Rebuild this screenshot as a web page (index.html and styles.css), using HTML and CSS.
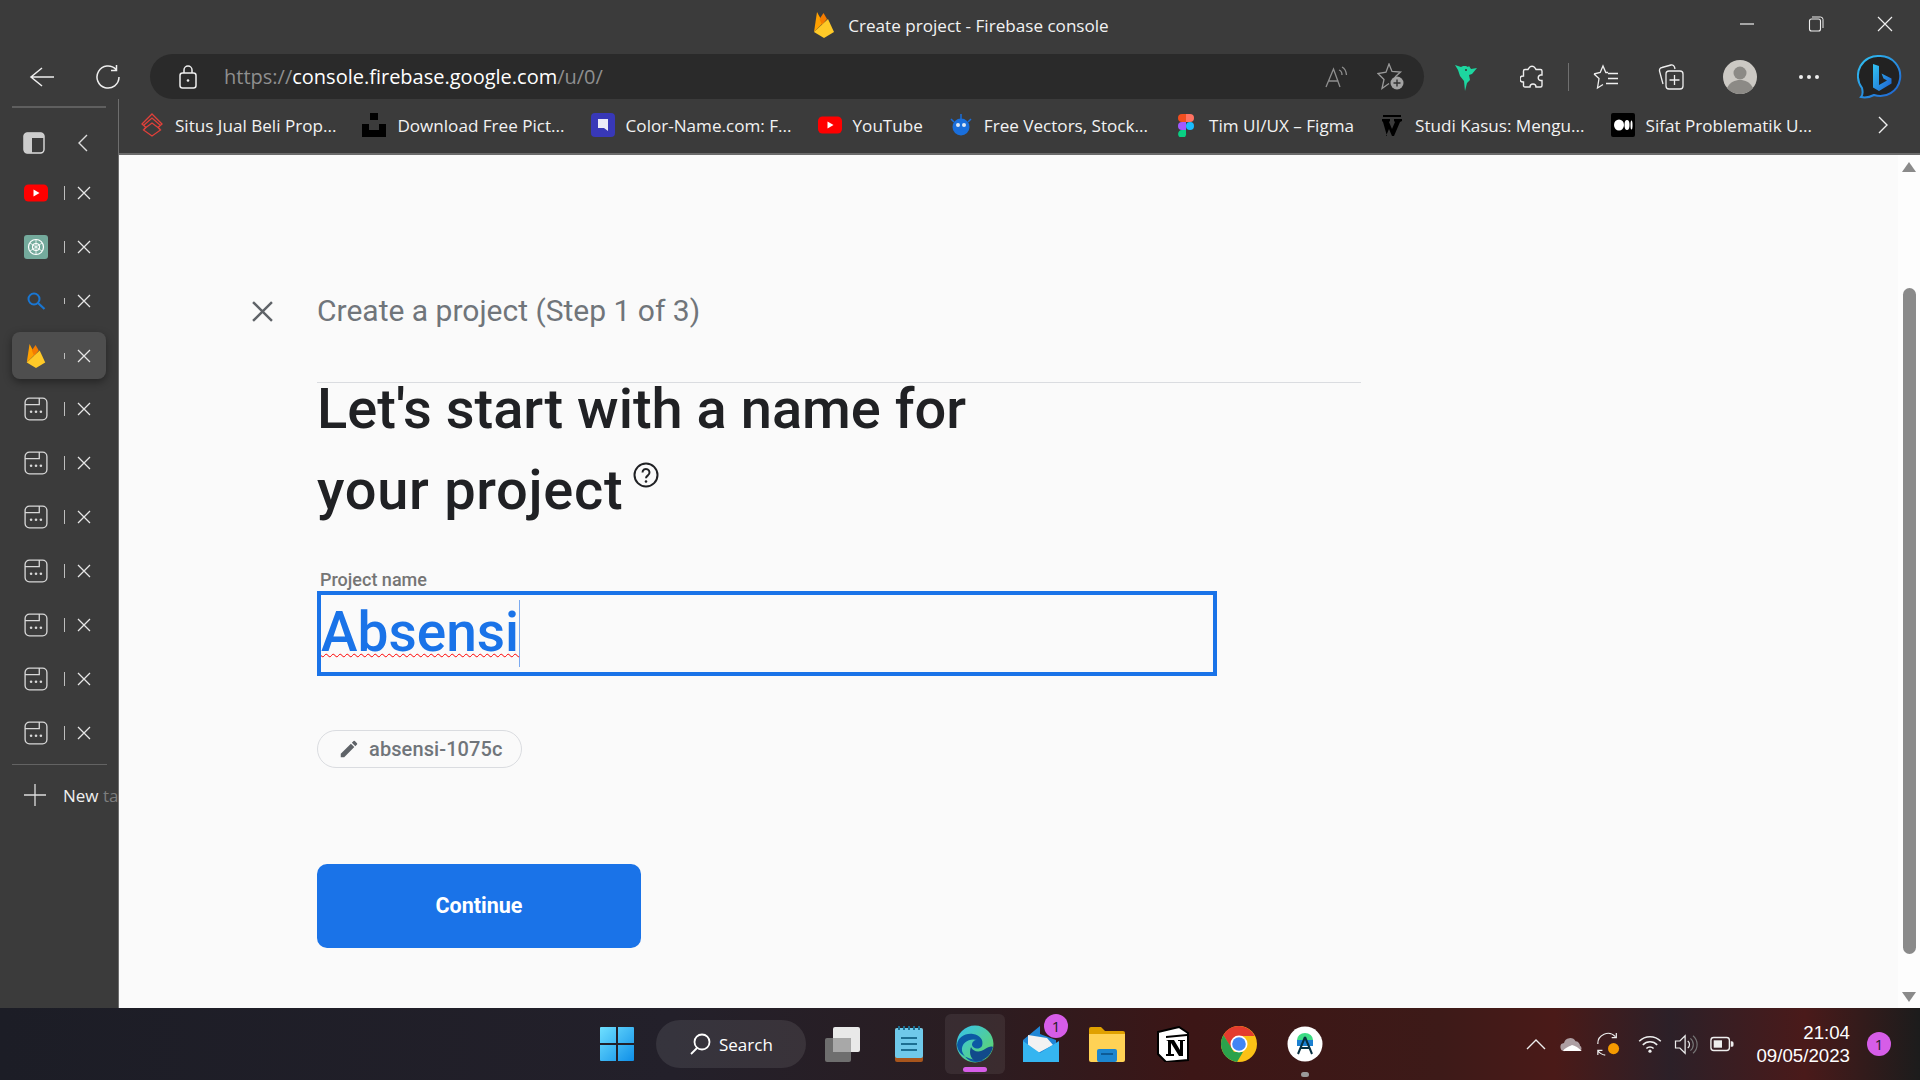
FILE: index.html
```html
<!DOCTYPE html>
<html lang="en">
  <head>
    <meta charset="UTF-8" />
    <title>Create project - Firebase console</title>
    <link rel="stylesheet" href="styles.css">
  </head>
  <body>
    <svg class="sprites" width="0" height="0">
      <symbol id="fire" viewBox="0 0 20 26">
        <path d="M0 20 3 0l6 11z" fill="#ffa000"/>
        <path d="M8 13 5.500 7 9.500 1l3.500 6z" fill="#f57c00"/>
        <path d="M0 20 14 7l6 13-10 6z" fill="#ffca28"/>
      </symbol>
      <symbol id="yt" viewBox="0 0 24 18">
        <rect width="24" height="17" y=".5" rx="4.500" fill="#f00"/>
        <path d="M9.500 5.500v7l6-3.500z" fill="#fff"/>
      </symbol>
      <symbol id="blank" viewBox="0 0 22 22">
        <path d="M1 5a4 4 0 0 1 4-4h12a4 4 0 0 1 4 4v12a4 4 0 0 1-4 4H5a4 4 0 0 1-4-4zM1 7h13V1" fill="none" stroke="#d8d8d8" stroke-width="1.200"/>
        <circle cx="6.500" cy="13.500" r="1.200" fill="#d8d8d8"/>
        <circle cx="11" cy="13.500" r="1.200" fill="#d8d8d8"/>
        <circle cx="15.500" cy="13.500" r="1.200" fill="#d8d8d8"/>
      </symbol>
      <symbol id="x" viewBox="0 0 14 14">
        <path d="M1 1l12 12M13 1 1 13" stroke="#e6e6e6" stroke-width="1.300" fill="none"/>
      </symbol>
    </svg>

    <div class="titlebar">
      <div class="title">
        <svg class="title-fire"><use href="#fire"/></svg>
        <span>Create project - Firebase console</span>
      </div>
      <div class="window-btns">
        <svg width="16" height="16" viewBox="0 0 16 16"><path d="M1 8h14" stroke="#eee" stroke-width="1.200"/></svg>
        <svg width="16" height="16" viewBox="0 0 16 16"><rect x="1.500" y="3" width="11" height="12" rx="2" fill="none" stroke="#eee" stroke-width="1.100"/><path d="M4 1h8.500a2.500 2.500 0 0 1 2.500 2.500V12" fill="none" stroke="#eee"/></svg>
        <svg width="16" height="16" viewBox="0 0 16 16"><path d="M1 1l14 14M15 1 1 15" stroke="#eee" stroke-width="1.200"/></svg>
      </div>
    </div>

    <div class="toolbar">
      <button class="nav-btn">
        <svg width="26" height="22" viewBox="0 0 26 22"><path d="M13 2 2 11l11 9M2 11h23" fill="none" stroke="#eee" stroke-width="1.500"/></svg>
      </button>
      <button class="nav-btn">
        <svg width="26" height="26" viewBox="0 0 26 26"><path d="M21 5.500A11 11 0 1 0 24 13M21.500 1v5.500H16" fill="none" stroke="#eee" stroke-width="1.500"/></svg>
      </button>
      <div class="address">
        <svg class="lock" width="20" height="24" viewBox="0 0 20 24"><rect x="2" y="8" width="16" height="15" rx="2.500" fill="none" stroke="#eee" stroke-width="1.500"/><path d="M6 8V5a4 4 0 0 1 8 0v3" fill="none" stroke="#eee" stroke-width="1.500"/><circle cx="10" cy="15.500" r="1.300" fill="#eee"/></svg>
        <div class="url"><span class="dim">https://</span>console.firebase.google.com<span class="dim">/u/0/</span></div>
        <svg class="read" width="24" height="24" viewBox="0 0 24 24"><path d="M1 22 8.500 4 15 22M3.500 16h10" fill="none" stroke="#8f8f8f" stroke-width="1.300"/><path d="M14 5q3 1 3 5M17 2q4 2 4.500 8" fill="none" stroke="#8f8f8f" stroke-width="1.300"/></svg>
        <svg width="28" height="28" viewBox="0 0 28 28"><path d="M12 20.500 5 25.500l2-9-6-6 8-1.300L12 1l3 7.500 8.500.5-5.500 5" fill="none" stroke="#9a9a9a" stroke-width="1.300"/><circle cx="20" cy="20" r="6.500" fill="#a3a3a3"/><path d="M20 16.500v7M16.500 20h7" stroke="#333" stroke-width="1.400"/></svg>
      </div>
      <div class="tool-icons">
        <svg width="24" height="30" viewBox="0 0 24 30"><path d="M1 3l6 2 2-1 3 0 2 1 1-1 2 3 6-1-5 6-3 1 1 5-3 3-2 8-1-10-4-5-2-6z" fill="#1dd6a0"/><circle cx="12" cy="8" r="1" fill="#333"/></svg>
        <svg width="24" height="26" viewBox="0 0 24 26"><path d="M9 4a3.500 3.500 0 0 1 6 0l1 1.500h4.500a1.500 1.500 0 0 1 1.500 1.500v4h-1.500a2.800 2.800 0 0 0 0 5.500H22v5a1.500 1.500 0 0 1-1.500 1.500H16a3 3 0 0 0-6 0H5A1.500 1.500 0 0 1 3.500 22v-4H3a3 3 0 0 1 0-6h.5V7A1.500 1.500 0 0 1 5 5.500h3z" fill="none" stroke="#eee" stroke-width="1.400"/></svg>
        <span class="tool-sep"></span>
        <svg width="26" height="26" viewBox="0 0 26 26"><path d="M1 10l6.200-1.500L10 2l2.800 6.500H15M1 10l5 4.500L4.500 24l5.500-3.500M15 9.500h10M15 14.500h10M13 19.500h12" fill="none" stroke="#eee" stroke-width="1.300"/></svg>
        <svg width="26" height="26" viewBox="0 0 26 26"><path d="M5 20 1.500 7A3 3 0 0 1 4 3.500L13 1a3 3 0 0 1 3.500 2L17 5" fill="none" stroke="#eee" stroke-width="1.300"/><rect x="8" y="7" width="17" height="18" rx="3" fill="none" stroke="#eee" stroke-width="1.300"/><path d="M16.500 11v10M11.500 16h10" stroke="#eee" stroke-width="1.300"/></svg>
        <svg class="avatar" width="34" height="34" viewBox="0 0 34 34"><circle cx="17" cy="17" r="17" fill="#ccc9c4"/><circle cx="17" cy="13" r="6.500" fill="#8c8a86"/><path d="M4 28c3-6 8-8 13-8s10 2 13 8a17 17 0 0 1-26 0z" fill="#8c8a86"/></svg>
        <div class="dots"><i></i><i></i><i></i></div>
        <svg class="bing" width="46" height="46" viewBox="0 0 46 46">
          <defs><linearGradient id="bingg" x1="0" y1="0" x2="1" y2="1"><stop offset="0" stop-color="#31c4f3"/><stop offset="1" stop-color="#1e5fd0"/></linearGradient></defs>
          <path d="M23 2a20 20 0 1 1-6 39c-4 2-9 3-13 2 2-2 2-5 1-9A20 20 0 0 1 23 2z" fill="#222" stroke="url(#bingg)" stroke-width="2"/>
          <path d="M16 10l6 2v19l8-4.500-3.500-2-2-5 10 5v5L22 37l-6-3.500z" fill="url(#bingg)"/>
        </svg>
      </div>
    </div>

    <div class="middle">
      <aside class="sidebar">
        <div class="side-top">
          <svg width="22" height="22" viewBox="0 0 22 22"><rect x="1" y="1" width="20" height="20" rx="3.500" fill="none" stroke="#ddd" stroke-width="1.400"/><path d="M1 5a3 3 0 0 1 3-4h14a3 3 0 0 1 3 4v1H9v15H4a3 3 0 0 1-3-3z" fill="#ccc"/></svg>
          <svg width="12" height="20" viewBox="0 0 12 20"><path d="M10 2 2 10l8 8" fill="none" stroke="#ddd" stroke-width="1.400"/></svg>
        </div>
        <div class="tab">
          <svg class="fav"><use href="#yt"/></svg><span class="tab-sep"></span><svg class="tab-x"><use href="#x"/></svg>
        </div>
        <div class="tab">
          <svg class="fav" viewBox="0 0 24 24"><rect width="24" height="24" rx="3" fill="#74aa9c"/><circle cx="12" cy="12" r="7.500" fill="none" stroke="#fff" stroke-width="1.200"/><circle cx="12" cy="12" r="3.500" fill="none" stroke="#fff" stroke-width="1.200"/><path d="M6 8l12 8M6 16 18 8M12 4.500v15" stroke="#fff" stroke-width=".8"/></svg><span class="tab-sep short"></span><svg class="tab-x"><use href="#x"/></svg>
        </div>
        <div class="tab">
          <svg class="fav" viewBox="0 0 24 24"><circle cx="10" cy="10" r="5.500" fill="none" stroke="#1976d2" stroke-width="2"/><path d="M14 14l6.500 6" stroke="#1976d2" stroke-width="2.200"/></svg><span class="tab-sep dot"></span><svg class="tab-x"><use href="#x"/></svg>
        </div>
        <div class="tab active">
          <svg class="fav"><use href="#fire"/></svg><span class="tab-sep dot"></span><svg class="tab-x"><use href="#x"/></svg>
        </div>
        <div class="tab"><svg class="fav"><use href="#blank"/></svg><span class="tab-sep"></span><svg class="tab-x"><use href="#x"/></svg></div>
        <div class="tab"><svg class="fav"><use href="#blank"/></svg><span class="tab-sep"></span><svg class="tab-x"><use href="#x"/></svg></div>
        <div class="tab"><svg class="fav"><use href="#blank"/></svg><span class="tab-sep"></span><svg class="tab-x"><use href="#x"/></svg></div>
        <div class="tab"><svg class="fav"><use href="#blank"/></svg><span class="tab-sep"></span><svg class="tab-x"><use href="#x"/></svg></div>
        <div class="tab"><svg class="fav"><use href="#blank"/></svg><span class="tab-sep"></span><svg class="tab-x"><use href="#x"/></svg></div>
        <div class="tab"><svg class="fav"><use href="#blank"/></svg><span class="tab-sep"></span><svg class="tab-x"><use href="#x"/></svg></div>
        <div class="tab"><svg class="fav"><use href="#blank"/></svg><span class="tab-sep"></span><svg class="tab-x"><use href="#x"/></svg></div>
        <div class="side-rule"></div>
        <div class="new-tab">
          <svg width="22" height="22" viewBox="0 0 22 22"><path d="M11 0v22M0 11h22" stroke="#ddd" stroke-width="1.300"/></svg>
          <span>New <span class="fade">ta</span></span>
        </div>
      </aside>

      <div class="main-col">
        <div class="bookmarks">
          <div class="bm">
            <svg width="24" height="24" viewBox="0 0 24 24"><path d="M12 1l10 10-4 3.500 2.500 2.500-8.500 6-8.500-6L6 14.500 2 11zM4 12l8-7 8 7M4 16l8-6 8 6" fill="none" stroke="#e0403a" stroke-width="1.300"/></svg>
            <span>Situs Jual Beli Prop...</span>
          </div>
          <div class="bm">
            <svg width="24" height="24" viewBox="0 0 24 24"><path d="M8 0h8v7H8zM0 11h7v6h10v-6h7v13H0z" fill="#000"/></svg>
            <span>Download Free Pict...</span>
          </div>
          <div class="bm">
            <svg width="24" height="24" viewBox="0 0 24 24"><rect width="24" height="24" rx="4" fill="#3838b8"/><path d="M7 6h10v12l-4-3H7z" fill="#fff" opacity=".9"/></svg>
            <span>Color-Name.com: F...</span>
          </div>
          <div class="bm">
            <svg width="24" height="24"><use href="#yt"/></svg>
            <span>YouTube</span>
          </div>
          <div class="bm">
            <svg width="24" height="24" viewBox="0 0 24 24"><circle cx="12" cy="14" r="8.500" fill="#1a6fdc"/><circle cx="9" cy="12" r="2" fill="#dfe9f5"/><circle cx="15" cy="12" r="2" fill="#dfe9f5"/><path d="M7 17h10M12 1v5M2 6l3 3M22 6l-3 3" stroke="#1a6fdc" stroke-width="1.500"/></svg>
            <span>Free Vectors, Stock...</span>
          </div>
          <div class="bm">
            <svg width="24" height="24" viewBox="0 0 24 24"><path d="M12 1H8a4 4 0 0 0 0 8h4z" fill="#f24e1e"/><path d="M12 1h4a4 4 0 0 1 0 8h-4z" fill="#ff7262"/><path d="M12 9H8a4 4 0 0 0 0 8h4z" fill="#a259ff"/><circle cx="16" cy="13" r="4" fill="#1abcfe"/><path d="M8 17h4v3a4 4 0 1 1-4-3z" fill="#0acf83"/></svg>
            <span>Tim UI/UX – Figma</span>
          </div>
          <div class="bm">
            <svg width="24" height="24" viewBox="0 0 24 24"><path d="M3 2h18v2H3zM2 6h8v2L9 9l3 7 3-7-1-1V6h8v2l-2 1-6 14h-2l-3-7-3 7H7L3 9 2 8z" fill="#000"/></svg>
            <span>Studi Kasus: Mengu...</span>
          </div>
          <div class="bm">
            <svg width="24" height="24" viewBox="0 0 24 24"><rect width="24" height="24" rx="2" fill="#000"/><ellipse cx="8" cy="12" rx="5" ry="5.500" fill="#fff"/><ellipse cx="16" cy="12" rx="2.500" ry="5" fill="#fff"/><ellipse cx="20.500" cy="12" rx="1" ry="4.500" fill="#fff"/></svg>
            <span>Sifat Problematik U...</span>
          </div>
          <svg class="bm-more" width="12" height="20" viewBox="0 0 12 20"><path d="M2 2l8 8-8 8" fill="none" stroke="#eee" stroke-width="1.400"/></svg>
        </div>

        <div class="page">
          <div class="content">
            <div class="head-row">
              <svg class="close" width="21" height="21" viewBox="0 0 20 20"><path d="M1 1l18 18M19 1 1 19" stroke="#5f6368" stroke-width="2.300"/></svg>
              <span class="step">Create a project (Step 1 of 3)</span>
            </div>
            <hr class="rule" />
            <h1>Let's start with a name for<br /><span class="line-two">your project</span><svg class="help" width="26" height="26" viewBox="0 0 26 26"><circle cx="13" cy="13" r="11.500" fill="none" stroke="#202124" stroke-width="2"/><path d="M9.500 10.500a3.500 3.500 0 1 1 5.500 2.800c-1.300 1-2 1.500-2 3" fill="none" stroke="#202124" stroke-width="2"/><circle cx="13" cy="19.500" r="1.300" fill="#202124"/></svg></h1>
            <label class="field-label">Project name</label>
            <div class="field"><span class="typed">Absensi</span></div>
            <div class="chip">
              <svg width="22" height="22" viewBox="0 0 24 24"><path d="M3 17.250V21h3.750L17.810 9.940l-3.750-3.750L3 17.250zM20.710 7.040a1 1 0 0 0 0-1.410l-2.340-2.340a1 1 0 0 0-1.410 0l-1.830 1.830 3.750 3.750 1.830-1.830z" fill="#5f6368"/></svg>
              <span>absensi-1075c</span>
            </div>
            <button class="continue">Continue</button>
          </div>
          <div class="scrollbar">
            <span class="arrow up"></span>
            <div class="track"><div class="thumb"></div></div>
            <span class="arrow down"></span>
          </div>
        </div>
      </div>
    </div>

    <div class="taskbar">
      <div class="task-center">
        <svg width="36" height="36" viewBox="0 0 36 36"><defs><linearGradient id="win" x1="0" y1="0" x2="1" y2="1"><stop offset="0" stop-color="#6fe0ff"/><stop offset="1" stop-color="#0f8fe8"/></linearGradient></defs><path d="M1 2a1 1 0 0 1 1-1h15v16H1zM19 1h15a1 1 0 0 1 1 1v15H19zM1 19h16v16H2a1 1 0 0 1-1-1zM19 19h16v15a1 1 0 0 1-1 1H19z" fill="url(#win)"/></svg>
        <div class="search-pill">
          <svg width="22" height="24" viewBox="0 0 22 24"><circle cx="13" cy="10" r="7.500" fill="none" stroke="#fff" stroke-width="1.800"/><path d="M8 16l-6 6" stroke="#fff" stroke-width="1.800"/></svg>
          <span>Search</span>
        </div>
        <span class="task-slot">
          <svg width="40" height="36" viewBox="0 0 40 36"><rect x="2" y="12" width="26" height="24" rx="2" fill="#6e6e6e"/><rect x="10" y="1" width="27" height="25" rx="2" fill="#e9e9e9"/><rect x="10" y="12" width="18" height="14" fill="#a8a8a8"/></svg>
        </span>
        <span class="task-slot">
          <svg width="30" height="36" viewBox="0 0 30 36"><rect x="1" y="2" width="28" height="34" rx="2" fill="#a8551c"/><rect x="1" y="2" width="28" height="30" rx="2" fill="#6fc9ea"/><path d="M7 12h16M7 18h16M7 24h16" stroke="#1c6f92" stroke-width="2"/><path d="M5 0v4M10 0v4M15 0v4M20 0v4M25 0v4" stroke="#1c6f92" stroke-width="2"/></svg>
        </span>
        <span class="task-slot edge">
          <svg width="38" height="38" viewBox="0 0 38 38"><defs><linearGradient id="edgeg" x1="0" y1="0" x2="1" y2="1"><stop offset="0" stop-color="#35c1f1"/><stop offset="1" stop-color="#64d85a"/></linearGradient></defs><circle cx="19" cy="19" r="18.500" fill="url(#edgeg)"/><path d="M1 20C2 12 9 8 17 9c7 1 11 6 9 12-3 4-9 3-10-1 0-3 2-5 5-5-7-2-16 2-15 11 2 6 7 11 14 11 4 0 7-1 10-3-9 3-29-1-29-15z" fill="#0c59a4"/><path d="M15 22c2 5 9 6 14 2 3-2 6-3 8-2-2 9-10 15-18 14-5-3-6-9-4-14z" fill="#114a8b"/></svg>
          <i class="running"></i>
        </span>
        <span class="task-slot">
          <svg width="36" height="36" viewBox="0 0 36 36"><path d="M0 14 17 0v8L33 14v22H0z" fill="#1f86d6"/><path d="M5 9 24 12l6 7-15 8L5 19z" fill="#f2f2f2"/><path d="M0 15l17 12 19-12v21H0z" fill="#35b5f0"/></svg>
          <b class="task-badge">1</b>
        </span>
        <span class="task-slot">
          <svg width="36" height="36" viewBox="0 0 36 36"><path d="M0 3a2 2 0 0 1 2-2h10l4 4h18a2 2 0 0 1 2 2v4H0z" fill="#e0a100"/><path d="M0 8h36v26a2 2 0 0 1-2 2H2a2 2 0 0 1-2-2z" fill="#ffd255"/><rect x="8" y="23" width="20" height="13" rx="2" fill="#1c86d0"/><path d="M12 28h12" stroke="#0d5b96" stroke-width="2"/></svg>
        </span>
        <span class="task-slot">
          <svg width="32" height="36" viewBox="0 0 32 36"><path d="M1 6 22 1l9 6v27l-22 2-8-8z" fill="#fff" stroke="#000" stroke-width="2"/><path d="M9 10 30 8v2L9 12z" fill="#000"/><path d="M11 14h6l6 10V15h-2v-1h7v1h-2v15h-4l-8-13v11h3v2h-8v-2h2V15h-2z" fill="#000"/></svg>
        </span>
        <span class="task-slot">
          <svg width="36" height="36" viewBox="0 0 36 36"><circle cx="18" cy="18" r="18" fill="#fbc116"/><path d="M18 0a18 18 0 0 0-15.600 9L10 22l8-12h15.600A18 18 0 0 0 18 0z" fill="#e33b2e"/><path d="M2.400 9A18 18 0 0 0 16 35.900L22 26H13z" fill="#2ba24c"/><circle cx="18" cy="18" r="8.500" fill="#fff"/><circle cx="18" cy="18" r="6.800" fill="#4285f4"/></svg>
        </span>
        <span class="task-slot">
          <svg width="36" height="36" viewBox="0 0 36 36"><circle cx="18" cy="18" r="17.500" fill="#fff"/><path d="M10 14a8 7 0 0 1 16 0z" fill="#3ddc84"/><rect x="10" y="14" width="16" height="6" fill="#1a7fd0"/><path d="M18 11 11 28M18 11l7 17M14 22h8" stroke="#073042" stroke-width="2" fill="none"/></svg>
          <i class="open-dot"></i>
        </span>
      </div>
      <div class="tray">
        <span class="tray-slot"><svg width="20" height="12" viewBox="0 0 20 12"><path d="M1 11 10 2l9 9" fill="none" stroke="#eee" stroke-width="1.400"/></svg></span>
        <span class="tray-slot"><svg width="24" height="16" viewBox="0 0 26 18"><path d="M5 17a4.500 4.500 0 0 1-1-9 7 7 0 0 1 13-2 5 5 0 0 1 5 5 3.500 3.500 0 0 1 0 6z" fill="#ad9ea2"/><path d="M3 17c1-3 6-5 10-7 3 1 8 3 11 7z" fill="#fff"/></svg></span>
        <span class="tray-slot"><svg width="24" height="24" viewBox="0 0 26 26"><path d="M2 13A11 11 0 0 1 21 5M22 1v5h-5M2 25v-5h5M2 20a11 11 0 0 0 8 5" fill="none" stroke="#eee" stroke-width="1.300"/><circle cx="19" cy="18" r="6" fill="#f59a00"/></svg></span>
        <span class="tray-slot wifi"><svg width="24" height="18" viewBox="0 0 26 20"><path d="M1 7a17 17 0 0 1 24 0M5 11a11 11 0 0 1 16 0M9 15a5.500 5.500 0 0 1 8 0" fill="none" stroke="#eee" stroke-width="1.700"/><circle cx="13" cy="18" r="1.800" fill="#eee"/></svg></span>
        <span class="tray-slot"><svg width="24" height="21" viewBox="0 0 26 24"><path d="M1 8h5l6-6v20l-6-6H1z" fill="none" stroke="#eee" stroke-width="1.400"/><path d="M15 8a5 5 0 0 1 0 8" fill="none" stroke="#eee" stroke-width="1.400"/><path d="M18 5a9 9 0 0 1 0 14M21 2a13 13 0 0 1 0 20" fill="none" stroke="#777" stroke-width="1.300"/></svg></span>
        <span class="tray-slot"><svg width="24" height="16" viewBox="0 0 26 16"><rect x="1" y="1" width="20" height="14" rx="3" fill="none" stroke="#eee" stroke-width="1.500"/><rect x="4" y="4" width="9" height="8" fill="#eee"/><path d="M22.500 5h1a2 2 0 0 1 2 2v2a2 2 0 0 1-2 2h-1z" fill="#eee"/></svg></span>
        <div class="clock"><span>21:04</span><span>09/05/2023</span></div>
        <b class="note-badge">1</b>
      </div>
    </div>
  </body>
</html>
```

FILE: styles.css
```css
* {
  box-sizing: border-box;
}

body {
  margin: 0;
  width: 1920px;
  height: 1080px;
  overflow: hidden;
  display: flex;
  flex-direction: column;
  background-color: #3b3b3b;
  font-family: "Open Sans", "Liberation Sans", sans-serif;
}

.sprites {
  position: absolute;
}

svg {
  display: block;
  flex-shrink: 0;
}

/* window title */
.titlebar {
  height: 54px;
  display: flex;
  justify-content: center;
  align-items: center;
  position: relative;
}

.title {
  display: flex;
  align-items: center;
  gap: 14px;
  color: #f2f2f2;
  font-size: 17.1px;
  margin-top: -4px;
  margin-left: 3px;
}

.title-fire {
  width: 20px;
  height: 26px;
}

.window-btns {
  position: absolute;
  top: 16px;
  right: 27px;
  display: flex;
  gap: 53px;
}

/* address row */
.toolbar {
  height: 45px;
  display: flex;
  align-items: center;
  flex-shrink: 0;
}

.nav-btn {
  width: 66px;
  height: 45px;
  background: none;
  border: none;
  padding: 0;
  display: flex;
  justify-content: center;
  align-items: center;
}

.nav-btn:first-child {
  margin-left: 9px;
}

.address {
  width: 1274px;
  height: 45px;
  margin-left: 9px;
  background-color: #2a2a2a;
  border-radius: 23px;
  display: flex;
  align-items: center;
  padding: 0 19px 0 28px;
}

.url {
  flex: 1;
  margin-left: 26px;
  font-size: 20px;
  color: #fff;
}

.dim {
  color: #8f8f8f;
}

.read {
  margin-right: 28px;
}

.tool-icons {
  flex: 1;
  display: flex;
  align-items: center;
  padding-left: 30px;
}

.tool-icons > svg:nth-child(2) {
  margin-left: 42px;
}

.tool-sep {
  width: 1px;
  height: 28px;
  background-color: #707070;
  margin: 0 24px;
}

.tool-icons > svg:nth-child(5) {
  margin-left: 39px;
}

.avatar {
  margin-left: 39px;
}

.dots {
  display: flex;
  gap: 4px;
  margin-left: 42px;
}

.dots i {
  width: 4px;
  height: 4px;
  border-radius: 50%;
  background-color: #eee;
}

.bing {
  margin-left: 38px;
}

/* sidebar + page */
.middle {
  flex: 1;
  display: flex;
  min-height: 0;
}

.sidebar {
  width: 119px;
  border-right: 1px solid #6e6e6e;
  padding-top: 7px;
  background-color: #3b3b3b;
}

.side-top {
  height: 60px;
  margin: 0 12px;
  border-top: 2px solid #5f5f5f;
  display: flex;
  align-items: center;
  padding-left: 11px;
  gap: 32px;
}

.side-top svg {
  margin-top: 12px;
}

.tab {
  height: 54px;
  width: 94px;
  margin-left: 12px;
  padding-left: 12px;
  display: flex;
  align-items: center;
  border-radius: 8px;
}

.tab.active {
  height: 47px;
  margin: 4px 0 3px 12px;
  background-color: #4e4e4e;
  box-shadow: 0 3px 8px rgba(0, 0, 0, 0.4);
}

.fav {
  width: 24px;
  height: 24px;
}

.tab-sep {
  width: 1px;
  height: 14px;
  margin-left: 16px;
  margin-right: 12px;
  background-color: #bdbdbd;
}

.tab-sep.short {
  height: 12px;
}

.tab-sep.dot {
  height: 6px;
}

.tab-x {
  width: 14px;
  height: 14px;
}

.side-rule {
  margin: 4px 0 0 12px;
  width: 95px;
  border-top: 1px solid #636363;
}

.new-tab {
  height: 60px;
  display: flex;
  align-items: center;
  gap: 17px;
  padding-left: 24px;
  white-space: nowrap;
  color: #f0f0f0;
  font-size: 17px;
}

.fade {
  color: #7d7d7d;
}

.main-col {
  flex: 1;
  display: flex;
  flex-direction: column;
  min-width: 0;
}

/* bookmarks */
.bookmarks {
  height: 56px;
  display: flex;
  align-items: center;
  border-bottom: 2px solid #6b6b6b;
  padding: 0 0 2px 21px;
  position: relative;
}

.bm {
  display: flex;
  align-items: center;
  gap: 11px;
  color: #f2f2f2;
  font-size: 17.1px;
  margin-right: 26px;
  white-space: nowrap;
}

.bm-more {
  position: absolute;
  right: 31px;
  top: 16px;
}

/* firebase page */
.page {
  flex: 1;
  display: flex;
  background-color: #fafafa;
  min-height: 0;
}

.content {
  flex: 1;
  padding: 138px 0 0 132px;
}

.head-row {
  display: flex;
  align-items: center;
  height: 36px;
}

.close {
  margin: 0 44px 0 1px;
}

.step {
  font-family: "Roboto", sans-serif;
  font-size: 30px;
  color: #70757a;
  margin-top: -2px;
}

.rule {
  width: 1044px;
  margin: 53px 0 0 66px;
  border: none;
  border-top: 1px solid #dadce0;
}

h1 {
  margin: -14px 0 0 66px;
  font-family: "Roboto", sans-serif;
  font-size: 56px;
  font-weight: 500;
  line-height: 81px;
  color: #202124;
}

.line-two {
  letter-spacing: 0.7px;
}

.help {
  display: inline-block;
  margin: 0 0 38px 10px;
  vertical-align: middle;
}

.field-label {
  display: block;
  margin: 38px 0 0 69px;
  font-family: "Roboto", sans-serif;
  font-size: 18px;
  font-weight: 500;
  line-height: 22px;
  color: #757575;
}

.field {
  width: 900px;
  height: 85px;
  margin-left: 66px;
  border: 4px solid #1a73e8;
  display: flex;
  align-items: center;
}

.typed {
  height: 67px;
  line-height: 65px;
  font-family: "Roboto", sans-serif;
  font-size: 55px;
  font-weight: 500;
  color: #1a73e8;
  border-right: 1px solid #7baaf0;
  text-decoration: underline wavy #f00 1.2px;
  text-underline-offset: 2px;
}

.chip {
  display: flex;
  align-items: center;
  gap: 9px;
  width: 205px;
  height: 38px;
  margin: 54px 0 0 66px;
  padding-left: 20px;
  border: 1px solid #dadce0;
  border-radius: 19px;
  font-family: "Roboto", sans-serif;
  font-size: 20px;
  font-weight: 500;
  letter-spacing: 0.1px;
  color: #70757a;
}

.continue {
  display: block;
  width: 324px;
  height: 84px;
  margin: 96px 0 0 66px;
  padding-bottom: 3px;
  background-color: #1a73e8;
  border: none;
  border-radius: 10px;
  color: #fff;
  font-family: "Roboto", sans-serif;
  font-size: 21.5px;
  font-weight: 700;
}

.scrollbar {
  width: 22px;
  display: flex;
  flex-direction: column;
  align-items: center;
  padding: 7px 0 6px;
  background-color: #fdfdfd;
}

.track {
  flex: 1;
  width: 13px;
  padding: 116px 0 38px;
}

.thumb {
  height: 100%;
  background-color: #8a8a8a;
  border-radius: 7px;
}

.arrow {
  width: 0;
  height: 0;
  border-left: 7px solid transparent;
  border-right: 7px solid transparent;
}

.arrow.up {
  border-bottom: 10px solid #8a8a8a;
}

.arrow.down {
  border-top: 10px solid #8a8a8a;
}

/* windows taskbar */
.taskbar {
  height: 72px;
  flex-shrink: 0;
  position: relative;
  background: linear-gradient(90deg, #1c1d26 0%, #23202a 35%, #2a1d22 50%, #3c1616 62%, #3d1a18 75%, #4a1a18 81%, #2c2028 87%, #4a1a1a 94%, #1c1c1c 100%);
}

.task-center {
  position: absolute;
  left: 599px;
  top: 0;
  height: 72px;
  display: flex;
  align-items: center;
}

.search-pill {
  width: 150px;
  height: 48px;
  margin-left: 21px;
  border-radius: 24px;
  background-color: rgba(255, 255, 255, 0.09);
  display: flex;
  align-items: center;
  gap: 8px;
  padding-left: 33px;
  color: #fff;
  font-size: 17px;
}

.task-slot {
  width: 66px;
  height: 60px;
  display: flex;
  justify-content: center;
  align-items: center;
  position: relative;
}

.search-pill + .task-slot {
  margin-left: 4px;
}

.task-slot.edge {
  background-color: rgba(255, 255, 255, 0.07);
  border-radius: 6px;
  width: 60px;
  margin: 0 3px;
}

.running {
  position: absolute;
  bottom: 2px;
  left: 18px;
  width: 24px;
  height: 5px;
  border-radius: 3px;
  background-color: #d65de8;
}

.open-dot {
  position: absolute;
  bottom: -3px;
  left: 29px;
  width: 8px;
  height: 5px;
  border-radius: 3px;
  background-color: #9a9a9a;
}

.task-badge {
  position: absolute;
  top: 0;
  right: 6px;
  width: 24px;
  height: 24px;
  border-radius: 50%;
  background-color: #d65de8;
  color: #1c1c1c;
  font-size: 15px;
  font-weight: 400;
  text-align: center;
  line-height: 24px;
}

.tray {
  position: absolute;
  top: 0;
  left: 1518px;
  height: 72px;
  display: flex;
  align-items: center;
  color: #fff;
}

.tray-slot {
  width: 36px;
  display: flex;
  justify-content: center;
}

.tray-slot.wifi {
  margin-left: 6px;
}

.clock {
  width: 110px;
  display: flex;
  flex-direction: column;
  align-items: flex-end;
  font-family: "Liberation Sans", sans-serif;
  font-size: 18.7px;
  line-height: 23px;
}

.note-badge {
  width: 24px;
  height: 24px;
  margin-left: 17px;
  border-radius: 50%;
  background-color: #d65de8;
  color: #1c1c1c;
  font-size: 15px;
  font-weight: 400;
  text-align: center;
  line-height: 24px;
}
```
